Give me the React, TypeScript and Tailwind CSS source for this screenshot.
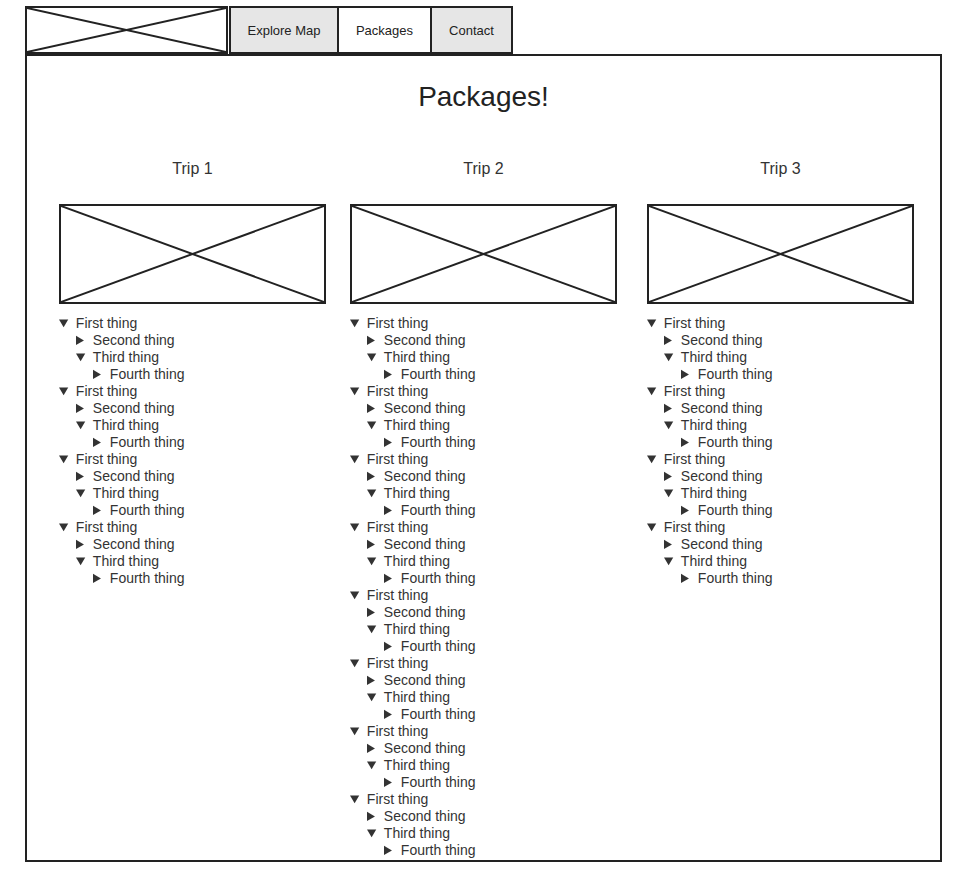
import React from 'react';

const PlaceholderImage = ({ className }: { className: string }) => (
  <div className={`relative border-2 border-[#222] bg-white ${className}`}>
    <svg className="absolute inset-0 h-full w-full" preserveAspectRatio="none" viewBox="0 0 100 100">
      <line x1="0" y1="0" x2="100" y2="100" stroke="#222" strokeWidth="2" vectorEffect="non-scaling-stroke" />
      <line x1="100" y1="0" x2="0" y2="100" stroke="#222" strokeWidth="2" vectorEffect="non-scaling-stroke" />
    </svg>
  </div>
);

const Item = ({ label }: { label: string }) => <span className="ml-[2px]">{label}</span>;

const ThingGroup = () => (
  <details open>
    <summary className="cursor-pointer"><Item label="First thing" /></summary>
    <div className="pl-[17px]">
      <details>
        <summary className="cursor-pointer"><Item label="Second thing" /></summary>
      </details>
      <details open>
        <summary className="cursor-pointer"><Item label="Third thing" /></summary>
        <div className="pl-[17px]">
          <details>
            <summary className="cursor-pointer"><Item label="Fourth thing" /></summary>
          </details>
        </div>
      </details>
    </div>
  </details>
);

interface TripProps {
  title: string;
  groups: number;
  className?: string;
}

const TripColumn: React.FC<TripProps> = ({ title, groups, className = '' }) => (
  <div className={`w-[267px] shrink-0 ${className}`}>
    <h2 className="mt-[47px] text-center text-[16px] leading-[18px]">{title}</h2>
    <PlaceholderImage className="mt-[26px] h-[100px] w-[267px]" />
    <div className="mt-[11px] text-[14px] leading-[17px]">
      {Array.from({ length: groups }).map((_, i) => (
        <ThingGroup key={i} />
      ))}
    </div>
  </div>
);

const tabs = [
  { label: 'Explore Map', width: 'w-[110px]', active: false },
  { label: 'Packages', width: 'w-[95px]', active: true },
  { label: 'Contact', width: 'w-[83px]', active: false },
];

export default function App() {
  return (
    <div className="min-h-screen bg-white pl-[25px] pt-[6px] text-[#333] [font-family:'Liberation_Sans',Arial,sans-serif]">
      <header className="flex h-[48px]">
        <PlaceholderImage className="h-[48px] w-[203px]" />
        <nav className="ml-[1px] flex">
          {tabs.map((tab, i) => (
            <button
              key={tab.label}
              className={`flex h-[48px] items-center justify-center border-2 border-[#222] pt-[2px] text-[13px] text-[#222] ${tab.width} ${
                tab.active ? 'bg-white' : 'bg-[#e6e6e6]'
              } ${i > 0 ? '-ml-[2px]' : ''}`}
            >
              {tab.label}
            </button>
          ))}
        </nav>
      </header>

      <main className="flex h-[808px] w-[917px] flex-col overflow-hidden border-2 border-[#222]">
        <h1 className="mt-[25px] text-center text-[28px] leading-[32px] text-[#222]">Packages!</h1>
        <div className="flex items-start pl-[32px]">
          <TripColumn title="Trip 1" groups={4} />
          <TripColumn title="Trip 2" groups={8} className="ml-[24px]" />
          <TripColumn title="Trip 3" groups={4} className="ml-[30px]" />
        </div>
      </main>
    </div>
  );
}
